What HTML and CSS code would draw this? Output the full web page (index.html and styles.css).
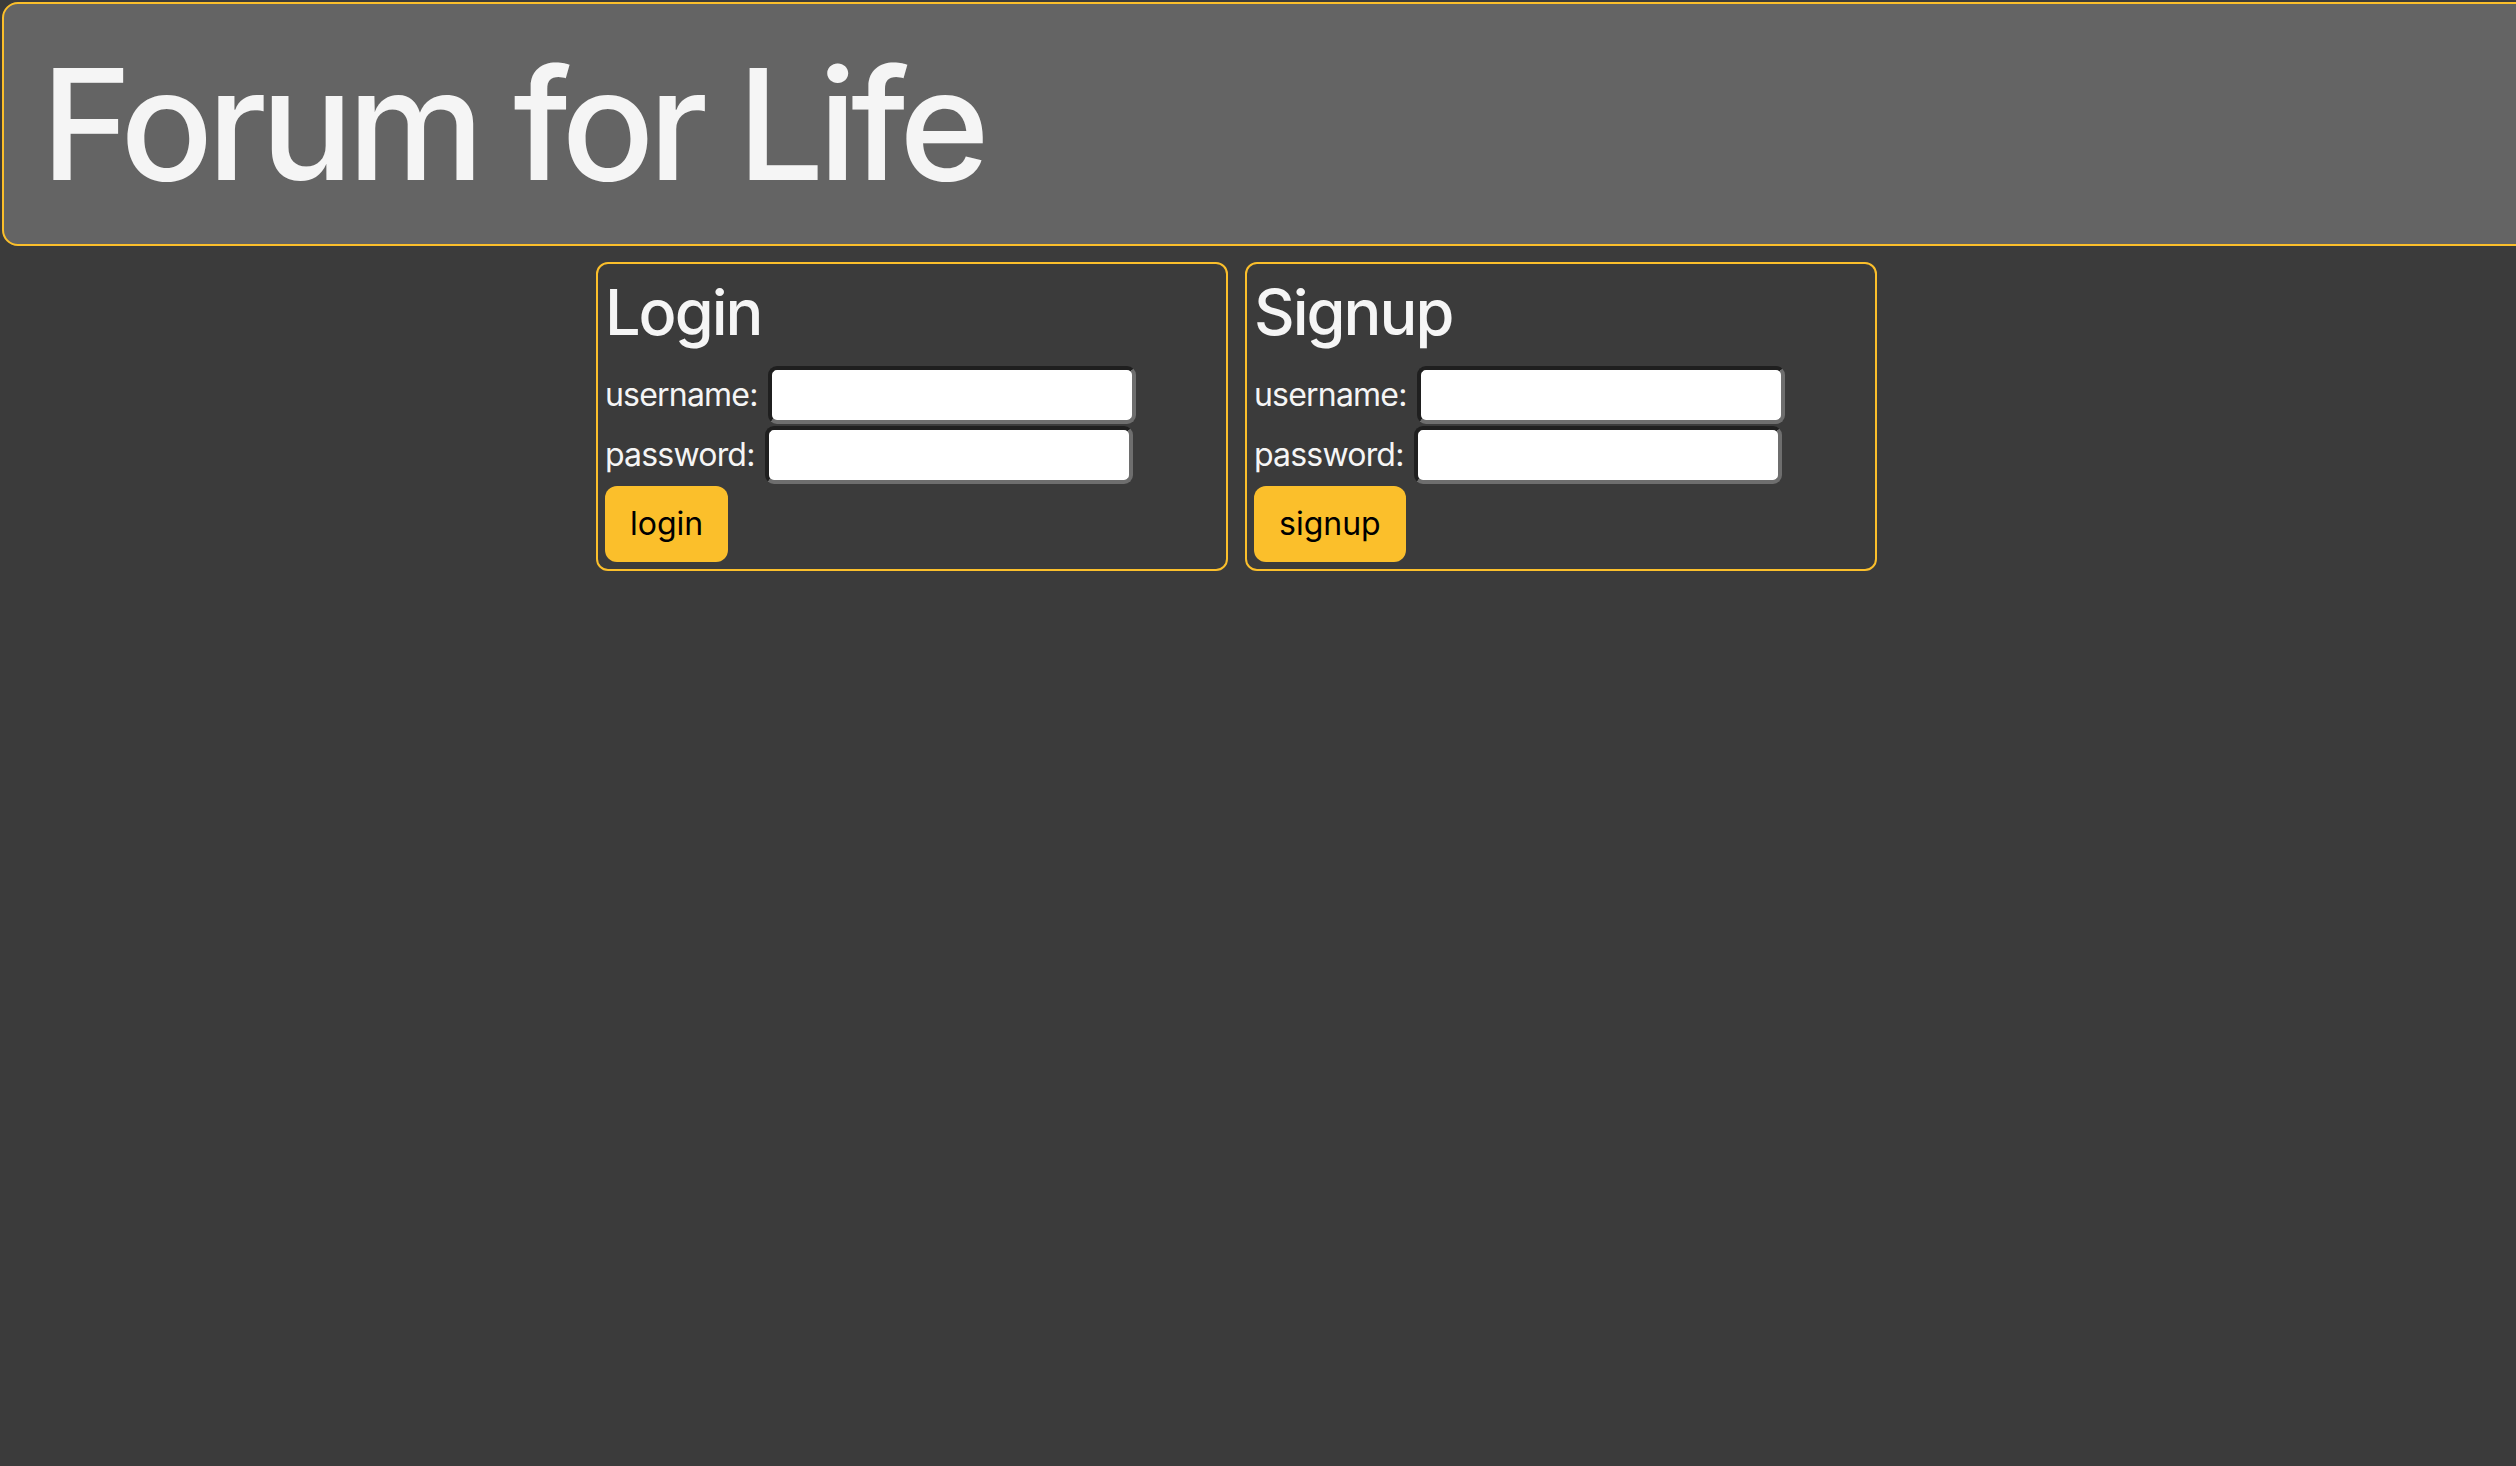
FILE: index.html
```html
<!DOCTYPE html>
<html lang="en">
<head>
<meta charset="utf-8">
<title>Forum for Life</title>
<link rel="stylesheet" href="styles.css">
</head>
<body>
<header class="site-header">
  <h1 class="site-title">Forum for Life</h1>
</header>
<main class="auth">
  <form class="panel">
    <h2 class="panel-title">Login</h2>
    <div class="row"><label class="label">username:</label><input class="field" type="text"></div>
    <div class="row"><label class="label">password:</label><input class="field" type="password"></div>
    <button class="btn" type="button">login</button>
  </form>
  <form class="panel">
    <h2 class="panel-title">Signup</h2>
    <div class="row"><label class="label">username:</label><input class="field" type="text"></div>
    <div class="row"><label class="label">password:</label><input class="field" type="password"></div>
    <button class="btn" type="button">signup</button>
  </form>
</main>
</body>
</html>
```
FILE: styles.css
```css
html, body {
  margin: 0;
  padding: 0;
}
body {
  background: #3b3b3b;
  color: #f5f5f5;
  font-family: Inter, "Liberation Sans", sans-serif;
  font-size: 32px;
  overflow: hidden;
  height: 1466px;
  padding: 2px 0 0 2px;
  box-sizing: border-box;
}
.site-header {
  width: calc(100% + 40px);
  height: 244px;
  box-sizing: border-box;
  background: #646464;
  border: 2px solid #fbbf2b;
  border-radius: 16px;
  padding: 23px 37px 0;
}
.site-title {
  margin: 0;
  font-size: 154px;
  font-weight: 500;
  line-height: 194px;
  letter-spacing: -6px;
}
.auth {
  display: flex;
  justify-content: center;
  gap: 17px;
  padding: 16px 45px 0 0;
}
.panel {
  width: 632px;
  box-sizing: border-box;
  border: 2px solid #fbbf2b;
  border-radius: 12px;
  padding: 10px 8px 7px 7px;
  display: flex;
  flex-direction: column;
  align-items: flex-start;
  gap: 2px;
}
.panel-title {
  margin: 0 0 14px;
  font-size: 63px;
  font-weight: 500;
  line-height: 76px;
  letter-spacing: -2px;
}
.row {
  display: flex;
  align-items: center;
  gap: 10px;
}
.label {
  line-height: 40px;
  letter-spacing: -0.8px;
}
.field {
  width: 368px;
  height: 58px;
  box-sizing: border-box;
  margin: 0;
  background: #fff;
  border: 4px solid;
  border-color: #1f1f1f #6e6e6e #6e6e6e #1f1f1f;
  border-radius: 9px;
  font-size: 28px;
}
.btn {
  margin: 0;
  border: none;
  background: #fbbf2b;
  color: #000;
  font-family: Inter, "Liberation Sans", sans-serif;
  font-size: 32px;
  line-height: 40px;
  padding: 18px 25px;
  border-radius: 12px;
}
```
